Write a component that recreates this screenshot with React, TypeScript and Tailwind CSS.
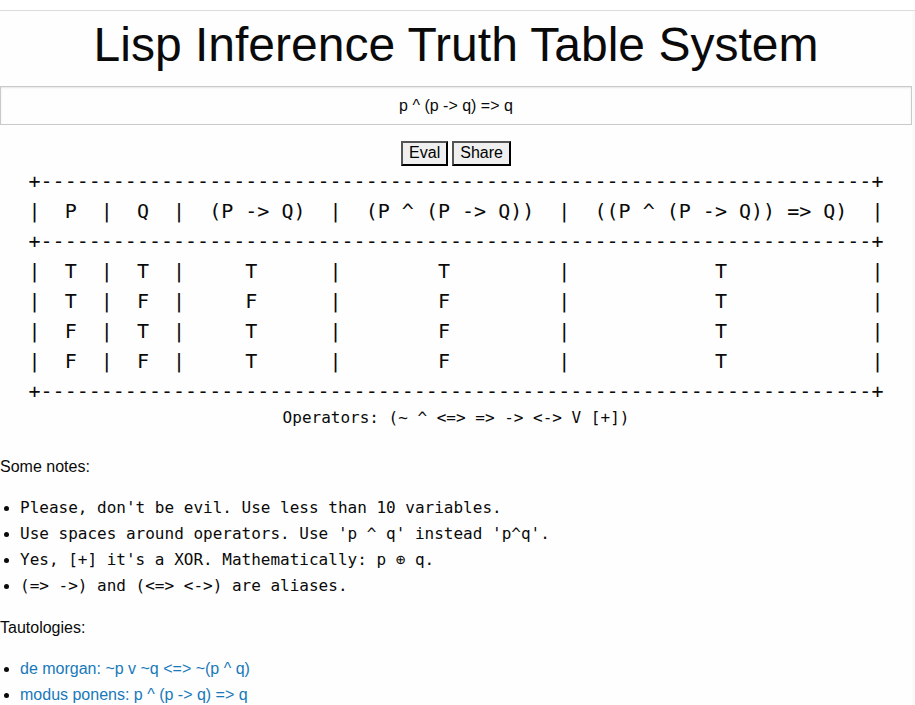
import { useState } from "react";

const headings = ["P", "Q", "(P -> Q)", "(P ^ (P -> Q))", "((P ^ (P -> Q)) => Q)"];

const rows = [
  ["T", "T", "T", "T", "T"],
  ["T", "F", "F", "F", "T"],
  ["F", "T", "T", "F", "T"],
  ["F", "F", "T", "F", "T"],
];

const notes = [
  "Please, don't be evil. Use less than 10 variables.",
  "Use spaces around operators. Use 'p ^ q' instead 'p^q'.",
  "Yes, [+] it's a XOR. Mathematically: p ⊕ q.",
  "(=> ->) and (<=> <->) are aliases.",
];

const tautologies = ["de morgan: ~p v ~q <=> ~(p ^ q)", "modus ponens: p ^ (p -> q) => q"];

const mono = "font-['DejaVu_Sans_Mono',monospace]";

// Each column is as wide as its heading plus two spaces on both sides.
const widths = headings.map((h) => h.length + 4);
const rule = "+" + "-".repeat(widths.reduce((a, b) => a + b + 1, -1)) + "+";

function center(text: string, width: number) {
  const left = Math.floor((width - text.length) / 2);
  return " ".repeat(left) + text + " ".repeat(width - text.length - left);
}

function cell(text: string, column: number) {
  return (column === 0 ? "|" : "") + center(text, widths[column]) + "|";
}

function Rule() {
  return (
    <tr className="block">
      <td colSpan={headings.length} className="inline p-0 align-baseline">
        {rule}
      </td>
    </tr>
  );
}

function TruthTable() {
  return (
    <table className={`mx-auto block w-max whitespace-pre text-xl leading-[30px] ${mono}`}>
      <thead className="block">
        <Rule />
        <tr className="block">
          {headings.map((h, i) => (
            <th key={h} scope="col" className="inline p-0 align-baseline font-normal">
              {cell(h, i)}
            </th>
          ))}
        </tr>
        <Rule />
      </thead>
      <tbody className="block">
        {rows.map((row, r) => (
          <tr key={r} className="block">
            {row.map((value, i) => (
              <td key={i} className="inline p-0 align-baseline">
                {cell(value, i)}
              </td>
            ))}
          </tr>
        ))}
        <Rule />
      </tbody>
    </table>
  );
}

const button =
  "border-2 border-black [border-style:outset] bg-[#efefef] px-1.5 pb-0.5 text-base leading-[19px] text-black";

export default function App() {
  const [expression, setExpression] = useState("p ^ (p -> q) => q");

  return (
    <div className="min-h-screen bg-[#fafafa] pr-[3px] font-['Liberation_Sans',Arial,sans-serif] text-base text-[#0a0a0a]">
      <div className="-mr-[3px] h-[11px] border-b border-[#dddddd] bg-white" />
      <main className="bg-[#fefefe]">
        <h1 className="mb-2 text-center text-5xl leading-[67px]">Lisp Inference Truth Table System</h1>
        <form onSubmit={(e) => e.preventDefault()}>
          <input
            type="text"
            aria-label="Expression"
            value={expression}
            onChange={(e) => setExpression(e.target.value)}
            className="mb-4 block h-[39px] w-full border border-[#cacaca] bg-[#fefefe] p-2 text-center text-base text-[#0a0a0a] shadow-[inset_0_1px_2px_rgba(10,10,10,0.1)]"
          />
          <div className="flex justify-center gap-1">
            <button type="submit" className={button}>
              Eval
            </button>
            <button type="button" className={button}>
              Share
            </button>
          </div>
        </form>
        <TruthTable />
        <p className={`text-center leading-6 ${mono}`}>{"Operators: (~ ^ <=> => -> <-> V [+])"}</p>
        <p className="mt-6 mb-4 leading-[25px]">Some notes:</p>
        <ul className="mb-4 ml-5 list-disc leading-[26px]">
          {notes.map((note) => (
            <li key={note}>
              <code className={`text-base leading-5 ${mono}`}>{note}</code>
            </li>
          ))}
        </ul>
        <p className="mb-4 leading-[25px]">Tautologies:</p>
        <ul className="ml-5 list-disc leading-[26px]">
          {tautologies.map((t) => (
            <li key={t}>
              <a href="#" className="text-[#1779ba]">
                {t}
              </a>
            </li>
          ))}
        </ul>
      </main>
    </div>
  );
}
